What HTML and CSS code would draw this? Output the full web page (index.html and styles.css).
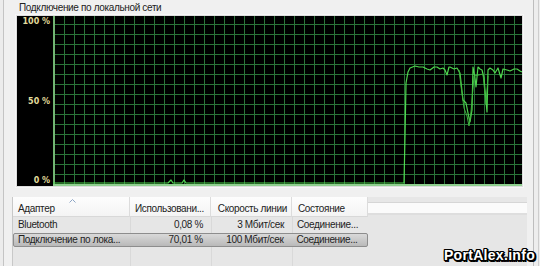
FILE: index.html
```html
<!DOCTYPE html>
<html lang="ru">
<head>
<meta charset="utf-8">
<title>Сеть</title>
<link rel="stylesheet" href="styles.css">
</head>
<body>
<div class="frame">
  <div class="title">Подключение по локальной сети</div>
  <div class="graph">
    <div class="labels">
      <span>100 %</span>
      <span>50 %</span>
      <span>0 %</span>
    </div>
    <svg class="plot" width="469" height="170" viewBox="0 0 469 170">
      <defs>
        <pattern id="grid" width="10" height="10" x="1" y="8" patternUnits="userSpaceOnUse">
          <path d="M0.5 0V10M0 0.5H10" stroke="#2a7439" stroke-width="1" fill="none"/>
        </pattern>
      </defs>
      <rect width="469" height="170" fill="#000"/>
      <rect width="469" height="170" fill="url(#grid)"/>
      <line x1="1" y1="0" x2="1" y2="170" stroke="#72b472" stroke-width="2"/>
      <line x1="0" y1="169" x2="469" y2="169" stroke="#8fd08f" stroke-width="2"/>
      <polyline fill="none" stroke="#4fd64f" stroke-width="1.2" stroke-linejoin="round"
        points="0,167 115,167 118,164 120,167 129,167 131,164 133,167 351,167 352,120 353,67 355,56 357,52 362,50 366,51 370,51 374,53 377,54 381,51 384,51 387,53 390,52 392,54 394,59 396,51 397,51 401,53 404,52 407,57 409,75 410,84 413,87 415,97 416,102 417,106 419,94 420,51 422,62 423,71 425,51 427,53 429,54 431,62 432,74 434,96 435,54 437,52 440,54 442,57 445,52 448,62 450,53 454,54 457,55 461,53 464,53 467,55 469,56"/>
      <polyline fill="none" stroke="#3fb43f" stroke-width="1" stroke-linejoin="round"
        points="406,54 408,70 411,92 414,100 416,110 418,96 421,60 430,58 433,88 435,60"/>
    </svg>
  </div>
  <div class="table">
    <div class="thead">
      <div class="th c1">Адаптер<svg class="sort" width="7" height="4" viewBox="0 0 7 4"><path d="M0.5 3.5L3.5 0.5L6.5 3.5" fill="none" stroke="#8ea6c6" stroke-width="1"/></svg></div>
      <div class="th c2">Использовани...</div>
      <div class="th c3 right">Скорость линии</div>
      <div class="th c4">Состояние</div>
      <div class="th-fill"></div>
    </div>
    <div class="tbody">
      <div class="row">
        <div class="td c1">Bluetooth</div>
        <div class="td c2 num">0,08 %</div>
        <div class="td c3 num">3 Мбит/сек</div>
        <div class="td c4">Соединение...</div>
      </div>
      <div class="row selected">
        <div class="td c1">Подключение по лока...</div>
        <div class="td c2 num">70,01 %</div>
        <div class="td c3 num">100 Мбит/сек</div>
        <div class="td c4">Соединение...</div>
      </div>
    </div>
  </div>
</div>
<div class="watermark">PortAlex.info</div>
</body>
</html>
```

FILE: styles.css
```css
html, body {
  margin: 0;
  padding: 0;
  background: #ececec;
  width: 540px;
  height: 266px;
  overflow: hidden;
  font-family: "Liberation Sans", Arial, sans-serif;
  font-size: 10px;
  letter-spacing: -0.35px;
  color: #1e1e1e;
}

.frame {
  margin-left: 3px;
  width: 529px;
  height: 266px;
  border-left: 1px solid #c4c4c4;
  border-right: 1px solid #bdbdbd;
  background: #f0f0f0;
  box-shadow: 4px 0 0 #ededed, 5px 0 0 #cdcdcd;
  box-sizing: content-box;
}

.title {
  height: 16px;
  line-height: 15px;
  padding-left: 15px;
  color: #222;
}

.graph {
  margin-left: 13px;
  width: 505px;
  height: 170px;
  display: flex;
  background: #000;
  box-shadow: 0 0 0 1px #dedede, 0 0 0 2px #f7f7f7;
}

.labels {
  width: 36px;
  display: flex;
  flex-direction: column;
  justify-content: space-between;
  align-items: flex-end;
  padding: 1px 3px 0 0;
  box-sizing: border-box;
  font-family: "DejaVu Sans", sans-serif;
  font-size: 8px;
  font-weight: bold;
  line-height: 10px;
  letter-spacing: 0;
  color: #e3dc9c;
}

.plot {
  display: block;
}

.table {
  margin-top: 11px;
  margin-left: 8px;
  width: 515px;
  height: 80px;
  border-left: 1px solid #c8c8c8;
  box-sizing: border-box;
  background: #e6e6e6;
}

.thead {
  display: flex;
  height: 20px;
}

.th {
  position: relative;
  height: 20px;
  line-height: 23px;
  padding: 0 5px;
  box-sizing: border-box;
  background: linear-gradient(#fdfdfd, #f4f4f4);
  border-right: 1px solid #dcdcdc;
  border-bottom: 1px solid #d8d8d8;
  white-space: nowrap;
  overflow: hidden;
  color: #222;
}

.th.right { text-align: right; padding-right: 4px; }

.sort {
  position: absolute;
  left: 56px;
  top: 2px;
}

.th-fill {
  flex: 1;
  height: 18px;
  box-sizing: border-box;
  border-top: 5px solid #e7e7e7;
  background: linear-gradient(#d6d6d6 0 1px, #fbfbfb 1px 11px, #dedede 11px);
}

.c1 { width: 117px; padding-left: 5px; }
.c2 { width: 81px; }
.c3 { width: 81px; }
.c4 { width: 76px; padding-left: 6px; }

.tbody {
  height: 60px;
  background:
    linear-gradient(to right,
      transparent 117px, #d9d9d9 117px 118px,
      transparent 118px 198px, #d9d9d9 198px 199px,
      transparent 199px 279px, #d9d9d9 279px 280px,
      transparent 280px);
}

.row {
  display: flex;
  height: 15px;
  width: 355px;
  box-sizing: border-box;
  line-height: 15px;
}

.row.selected {
  margin-top: 1px;
  height: 14px;
  line-height: 12px;
  border: 1px solid #8d8d8d;
  border-radius: 2px;
  background: linear-gradient(#d9d9d9, #b9b9b9);
}

.td {
  box-sizing: border-box;
  white-space: nowrap;
  overflow: hidden;
  padding: 0 5px;
}

.td.num {
  text-align: right;
  padding-right: 8px;
}

.row.selected .td.c1 { padding-left: 4px; }

.watermark {
  position: absolute;
  right: 5px;
  bottom: 3px;
  font-family: "Liberation Sans", Arial, sans-serif;
  font-weight: bold;
  font-size: 14px;
  line-height: 15px;
  color: #fff;
  letter-spacing: 0.3px;
  text-shadow:
    1px 0 0 #000, -1px 0 0 #000, 0 1px 0 #000, 0 -1px 0 #000,
    1px 1px 0 #000, -1px -1px 0 #000, 1px -1px 0 #000, -1px 1px 0 #000,
    2px 0 0 #000, 0 2px 0 #000, 2px 2px 0 #000;
}
```
